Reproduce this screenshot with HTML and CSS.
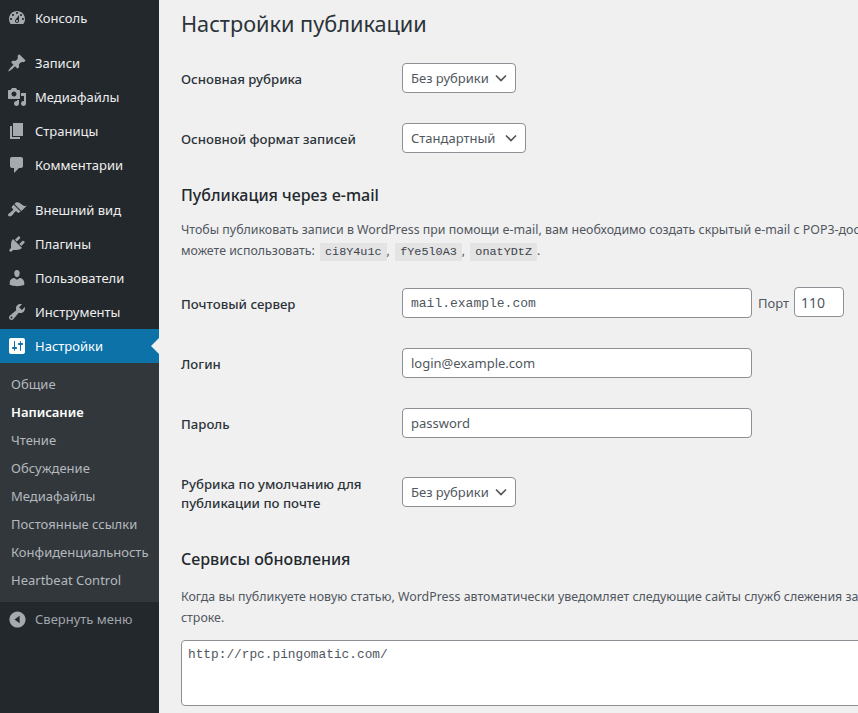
FILE: index.html
```html
<!doctype html>
<html>
    <head>
        <title>Настройки публикации</title>
        <meta charset="UTF-8">
        <link rel="stylesheet" href="styles.css">
    </head>

    <body>
        <!--Sidebar Start-->
        <nav class="sidebar">
            <a class="item"><svg viewBox="0 0 20 20"><path d="M3.76 16h12.48c1.1-1.37 1.76-3.11 1.76-5 0-4.42-3.58-8-8-8s-8 3.58-8 8c0 1.89.66 3.63 1.76 5zM10 4c.55 0 1 .45 1 1s-.45 1-1 1-1-.45-1-1 .45-1 1-1zM6 6c.55 0 1 .45 1 1s-.45 1-1 1-1-.45-1-1 .45-1 1-1zm8 0c.55 0 1 .45 1 1s-.45 1-1 1-1-.45-1-1 .45-1 1-1zm-5.37 5.55L12 7v6c0 1.1-.9 2-2 2s-2-.9-2-2c0-.57.24-1.08.63-1.45zM4 10c.55 0 1 .45 1 1s-.45 1-1 1-1-.45-1-1 .45-1 1-1zm12 0c.55 0 1 .45 1 1s-.45 1-1 1-1-.45-1-1 .45-1 1-1zm-5 3c0-.55-.45-1-1-1s-1 .45-1 1 .45 1 1 1 1-.45 1-1z"/></svg>Консоль</a>
            <div class="sep"></div>
            <a class="item"><svg viewBox="0 0 20 20"><path d="M10.44 3.02l1.82-1.82 6.36 6.35-1.83 1.82c-1.05-.68-2.48-.57-3.41.36l-.75.75c-.92.93-1.04 2.35-.35 3.41l-1.83 1.82-2.41-2.41-2.8 2.79c-.42.42-3.38 2.71-3.8 2.29s1.86-3.39 2.28-3.81l2.79-2.79L4.1 9.36l1.83-1.82c1.05.69 2.48.57 3.4-.36l.75-.75c.93-.92 1.05-2.35.36-3.41z"/></svg>Записи</a>
            <a class="item"><svg viewBox="0 0 20 20"><path d="M13 11V4c0-.55-.45-1-1-1h-1.67L9 1H5L3.67 3H2c-.55 0-1 .45-1 1v7c0 .55.45 1 1 1h10c.55 0 1-.45 1-1zM7 4.5c1.38 0 2.5 1.12 2.5 2.5S8.38 9.5 7 9.5 4.5 8.38 4.5 7 5.62 4.5 7 4.5zM14 6h5v10.5c0 1.38-1.12 2.5-2.5 2.5S14 17.88 14 16.5s1.12-2.5 2.5-2.5c.17 0 .34.02.5.05V9h-3V6zm-4 8.05V13h2v3.5c0 1.38-1.12 2.5-2.5 2.5S7 17.88 7 16.5 8.12 14 9.5 14c.17 0 .34.02.5.05z"/></svg>Медиафайлы</a>
            <a class="item"><svg viewBox="0 0 20 20"><path d="M6 15V2h10v13H6zm-1 1h8v2H3V5h2v11z"/></svg>Страницы</a>
            <a class="item"><svg viewBox="0 0 20 20"><path d="M5 2h9c1.1 0 2 .9 2 2v7c0 1.1-.9 2-2 2h-2l-5 5v-5H5c-1.1 0-2-.9-2-2V4c0-1.1.9-2 2-2z"/></svg>Комментарии</a>
            <div class="sep"></div>
            <a class="item"><svg viewBox="0 0 20 20"><path d="M14.48 11.06L7.41 3.99l1.5-1.5c.5-.56 2.3-.47 3.51.32 1.21.8 1.43 1.28 2.91 2.1 1.18.64 2.45 1.26 4.45.85zm-.71.71L6.7 4.7 4.93 6.47c-.39.39-.39 1.02 0 1.41l1.06 1.06c.39.39.39 1.03 0 1.42-.6.6-1.43 1.11-2.21 1.69-.35.26-.7.53-1.01.84C1.43 13.23.4 14.89 1.53 16c1.12 1.12 2.78.09 4.11-1.24.31-.31.58-.66.84-1.01.58-.78 1.09-1.61 1.69-2.21.39-.39 1.03-.39 1.42 0l1.06 1.06c.39.39 1.02.39 1.41 0z"/></svg>Внешний вид</a>
            <a class="item"><svg viewBox="0 0 20 20"><path d="M13.11 4.36L9.87 7.6 8 5.73l3.24-3.24c.35-.34 1.05-.2 1.56.32.52.51.66 1.21.31 1.55zm-8 1.77l.91-1.12 9.01 9.01-1.19.84c-.71.71-2.63 1.16-3.82 1.16H6.14L4.9 17.26c-.59.59-1.54.59-2.12 0-.59-.58-.59-1.53 0-2.12l1.24-1.24v-3.88c0-1.13.4-3.19 1.09-3.89zm7.26 3.97l3.24-3.24c.34-.35 1.04-.21 1.55.31.52.51.66 1.21.31 1.55l-3.24 3.25z"/></svg>Плагины</a>
            <a class="item"><svg viewBox="0 0 20 20"><path d="M10 9.25c-2.27 0-2.73-3.44-2.73-3.44C7 4.02 7.82 2 9.97 2c2.16 0 2.98 2.02 2.71 3.81 0 0-.41 3.44-2.68 3.44zm0 2.57L12.72 10c2.39 0 4.52 2.33 4.52 4.53v2.49s-3.65 1.13-7.24 1.13c-3.65 0-7.24-1.13-7.24-1.13v-2.49c0-2.25 1.94-4.48 4.47-4.48z"/></svg>Пользователи</a>
            <a class="item"><svg viewBox="0 0 20 20"><path d="M16.68 9.77c-1.34 1.34-3.3 1.67-4.95.99l-5.41 6.52c-.99.99-2.59.99-3.58 0s-.99-2.59 0-3.57l6.52-5.42c-.68-1.65-.35-3.61.99-4.95 1.28-1.28 3.12-1.62 4.72-1.06l-2.89 2.89 2.82 2.82 2.86-2.87c.53 1.58.18 3.39-1.08 4.65zM3.81 16.21c.4.39 1.04.39 1.43 0 .4-.4.4-1.04 0-1.43-.39-.4-1.03-.4-1.43 0-.39.39-.39 1.03 0 1.43z"/></svg>Инструменты</a>
            <a class="item active"><svg viewBox="0 0 20 20"><path d="M18 16V4c0-1.1-.9-2-2-2H4c-1.1 0-2 .9-2 2v12c0 1.1.9 2 2 2h12c1.1 0 2-.9 2-2zM8 11h1c.55 0 1 .45 1 1s-.45 1-1 1H8v1.5c0 .28-.22.5-.5.5s-.5-.22-.5-.5V13H6c-.55 0-1-.45-1-1s.45-1 1-1h1V5.5c0-.28.22-.5.5-.5s.5.22.5.5V11zm5-2h-1c-.55 0-1-.45-1-1s.45-1 1-1h1V5.5c0-.28.22-.5.5-.5s.5.22.5.5V7h1c.55 0 1 .45 1 1s-.45 1-1 1h-1v5.5c0 .28-.22.5-.5.5s-.5-.22-.5-.5V9z"/></svg>Настройки</a>
            <ul class="submenu">
                <li>Общие</li>
                <li class="current">Написание</li>
                <li>Чтение</li>
                <li>Обсуждение</li>
                <li>Медиафайлы</li>
                <li>Постоянные ссылки</li>
                <li>Конфиденциальность</li>
                <li>Heartbeat Control</li>
            </ul>
            <a class="item collapse"><svg viewBox="0 0 20 20"><path d="M10 .5c5.2 0 9.5 4.3 9.5 9.5s-4.3 9.5-9.5 9.5S.5 15.2.5 10 4.8.5 10 .5zM12.5 14.5v-9L6.5 10z"/></svg>Свернуть меню</a>
        </nav>
        <!--Sidebar End-->

        <!--Content Start-->
        <main class="content">
            <h1 class="title">Настройки публикации</h1>

            <div class="row first">
                <label>Основная рубрика</label>
                <select class="short"><option>Без рубрики</option></select>
            </div>
            <div class="row">
                <label>Основной формат записей</label>
                <select class="wide"><option>Стандартный</option></select>
            </div>

            <h2 class="mail-head">Публикация через e-mail</h2>
            <p class="note mail-note">Чтобы публиковать записи в WordPress при помощи e-mail, вам необходимо создать скрытый e-mail с POP3-доступом. Любое письмо,<br>можете использовать: <code>ci8Y4u1c</code>, <code>fYe5l0A3</code>, <code>onatYDtZ</code>.</p>

            <div class="row server">
                <label>Почтовый сервер</label>
                <input class="field mono" type="text" value="mail.example.com">
                <span class="port-label">Порт</span>
                <input class="port" type="text" value="110">
            </div>
            <div class="row">
                <label>Логин</label>
                <input class="field" type="text" value="login@example.com">
            </div>
            <div class="row">
                <label>Пароль</label>
                <input class="field" type="text" value="password">
            </div>
            <div class="row tall">
                <label>Рубрика по умолчанию для публикации по почте</label>
                <select class="short"><option>Без рубрики</option></select>
            </div>

            <h2 class="rpc-head">Сервисы обновления</h2>
            <p class="note rpc-note">Когда вы публикуете новую статью, WordPress автоматически уведомляет следующие сайты служб слежения за обновлениями.<br>строке.</p>
            <textarea class="services">http://rpc.pingomatic.com/</textarea>
        </main>
        <!--Content End-->
    </body>
</html>
```

FILE: styles.css
```css
html{
    height: 100%;
    overflow: hidden;
}

body{
    display: flex;
    height: 713px;
    margin: 0;
    overflow: hidden;
    font-family: "Noto Sans", "Open Sans", Arial, sans-serif;
    font-size: 13px;
    color: #50575e;
    background: #f0f0f1;
}

/*Sidebar*/
.sidebar{
    flex: 0 0 159px;
    padding-top: 1px;
    background: #23282d;
    color: #eee;
}

.sidebar .item{
    position: relative;
    display: flex;
    align-items: center;
    height: 34px;
    padding-left: 7px;
}

.sidebar .item svg{
    width: 20px;
    height: 20px;
    margin-right: 8px;
    fill: #a7aaad;
}

.sidebar .sep{
    height: 11px;
}

.sidebar .active{
    background: #0d72a8;
    color: #fff;
}

.sidebar .item.active svg{
    fill: #fff;
}

.sidebar .active::after{
    content: "";
    position: absolute;
    right: 0;
    top: 9px;
    border: 8px solid transparent;
    border-left: 0;
    border-right-color: #f0f0f1;
}

.submenu{
    margin: 0;
    padding: 7px 0 8px;
    list-style: none;
    background: #32373c;
    color: #b4b9be;
}

.submenu li{
    height: 28px;
    line-height: 28px;
    padding-left: 11px;
    white-space: nowrap;
}

.submenu .current{
    color: #fff;
    font-weight: 600;
}

.sidebar .collapse{
    color: #a0a5aa;
}

.sidebar .collapse svg{
    width: 17px;
    height: 17px;
    margin: 0 9px 0 2px;
}

/*Content*/
.content{
    flex: 1;
    min-width: 0;
    padding-left: 22px;
    overflow: hidden;
}

.title{
    margin: 8px 0 0;
    font-size: 21.7px;
    line-height: 32px;
    font-weight: 400;
    color: #2c3338;
}

h2{
    font-size: 16px;
    line-height: 24px;
    font-weight: 500;
    color: #23282d;
    margin: 0;
}

.mail-head{
    margin-top: 30px;
}

.rpc-head{
    margin-top: 40px;
}

.note{
    width: 900px;
    line-height: 21px;
    white-space: nowrap;
    font-size: 12.4px;
}

.mail-note{
    margin: 12px 0 0;
}

.rpc-note{
    margin: 15px 0 0;
}

code{
    margin-left: 2px;
    padding: 2px 5px;
    background: #e4e4e5;
    color: #3c434a;
    font-family: "Liberation Mono", monospace;
    font-size: 11.8px;
}

.row{
    display: flex;
    align-items: center;
    margin-top: 30px;
    height: 30px;
}

.row.first{
    margin-top: 23px;
}

.row.server{
    margin-top: 25px;
}

.row.tall{
    margin-top: 39px;
}

.row label{
    flex: 0 0 221px;
    padding-top: 2px;
    font-size: 13.2px;
    font-weight: 500;
    color: #2c3338;
    line-height: 19px;
}

.row.tall label{
    flex-basis: 195px;
    margin-right: 26px;
    padding-top: 4px;
}

select,
input,
textarea{
    box-sizing: border-box;
    border: 1px solid #8c8f94;
    border-radius: 4px;
    background-color: #fff;
    color: #50575e;
    font-family: inherit;
    font-size: 13px;
}

select{
    appearance: none;
    height: 30px;
    padding: 0 24px 0 8px;
    background-image: url("data:image/svg+xml,%3Csvg xmlns='http://www.w3.org/2000/svg' width='12' height='8'%3E%3Cpath d='M1 1.5l5 5 5-5' fill='none' stroke='%23555' stroke-width='1.7'/%3E%3C/svg%3E");
    background-repeat: no-repeat;
    background-position: right 8px center;
}

select.short{
    width: 114px;
}

select.wide{
    width: 124px;
}

input{
    height: 30px;
    padding: 0 8px;
}

.field{
    width: 350px;
}

.mono{
    font-family: "Liberation Mono", monospace;
}

.port-label{
    margin: 0 5px 0 6px;
}

.port{
    width: 50px;
    height: 30px;
    padding: 0 6px;
    font-size: 14px;
    position: relative;
    top: -1px;
}

.services{
    display: block;
    width: 700px;
    height: 66px;
    margin-top: 12px;
    padding: 6px;
    font-family: "Liberation Mono", monospace;
    font-size: 12.8px;
    resize: none;
}
```
